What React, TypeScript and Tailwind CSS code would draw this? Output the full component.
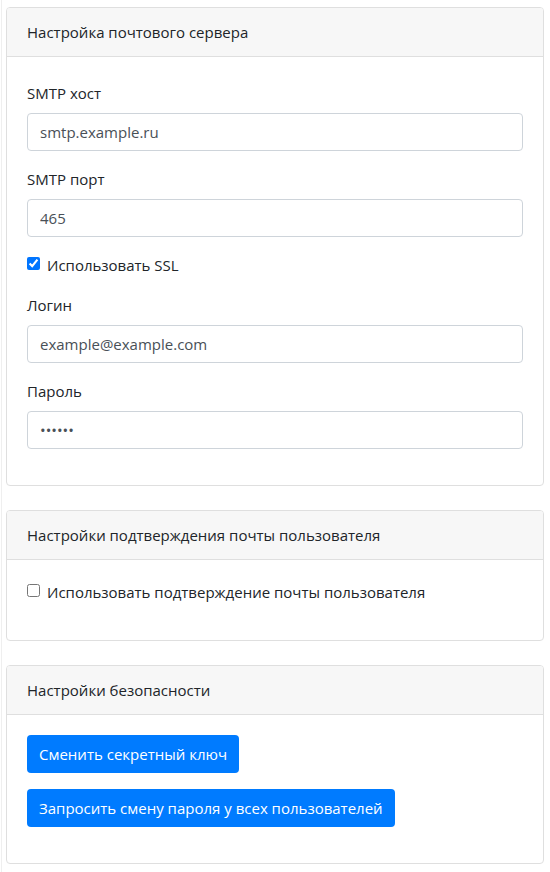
import React from "react";

const font = { fontFamily: '"Open Sans", "Noto Sans", sans-serif' };

function Card({ title, children, bodyClass }: { title: string; children: React.ReactNode; bodyClass: string }) {
  return (
    <div className="mb-6 rounded-[4px] border border-[#dfdfdf] bg-white">
      <div className="rounded-t-[3px] border-b border-[#dfdfdf] bg-[#f7f7f7] px-5 py-3 text-[15px] leading-6 text-[#212529]">
        {title}
      </div>
      <div className={bodyClass}>{children}</div>
    </div>
  );
}

function Field({ label, value, type = "text" }: { label: string; value: string; type?: string }) {
  return (
    <div className="mb-4">
      <div className="mb-2 text-[15px] leading-6 text-[#212529]">{label}</div>
      <input
        type={type}
        readOnly
        defaultValue={value}
        className="block h-[38px] w-full rounded-[4px] border border-[#ced4da] bg-white px-3 text-[15px] leading-6 text-[#495057] outline-none"
        style={font}
      />
    </div>
  );
}

function Check({ label, checked }: { label: string; checked: boolean }) {
  return (
    <div className="mb-4 flex items-start text-[15px] leading-6 text-[#212529]">
      <input type="checkbox" readOnly defaultChecked={checked} className="m-0 mt-1 h-[13px] w-[13px] shrink-0" />
      <span className="ml-[7px]">{label}</span>
    </div>
  );
}

function Btn({ children }: { children: React.ReactNode }) {
  return (
    <div className="mb-4">
      <button className="h-[38px] rounded-[4px] bg-[#007bff] px-3 text-[15px] leading-6 text-white" style={font}>
        {children}
      </button>
    </div>
  );
}

export default function App() {
  return (
    <div className="min-h-[872px] bg-white" style={font}>
      <div className="ml-px min-h-[872px] border-l border-[#efefef] pl-[4px] pr-[6px] pt-[7px] pb-[1px]">
        <Card title="Настройка почтового сервера" bodyClass="px-5 pt-6 pb-5">
          <Field label="SMTP хост" value="smtp.example.ru" />
          <Field label="SMTP порт" value="465" />
          <Check label="Использовать SSL" checked={true} />
          <Field label="Логин" value="example@example.com" />
          <Field label="Пароль" value="123456" type="password" />
        </Card>
        <Card title="Настройки подтверждения почты пользователя" bodyClass="px-5 pt-5 pb-5">
          <Check label="Использовать подтверждение почты пользователя" checked={false} />
        </Card>
        <Card title="Настройки безопасности" bodyClass="px-5 pt-5 pb-5">
          <Btn>Сменить секретный ключ</Btn>
          <Btn>Запросить смену пароля у всех пользователей</Btn>
        </Card>
      </div>
    </div>
  );
}
